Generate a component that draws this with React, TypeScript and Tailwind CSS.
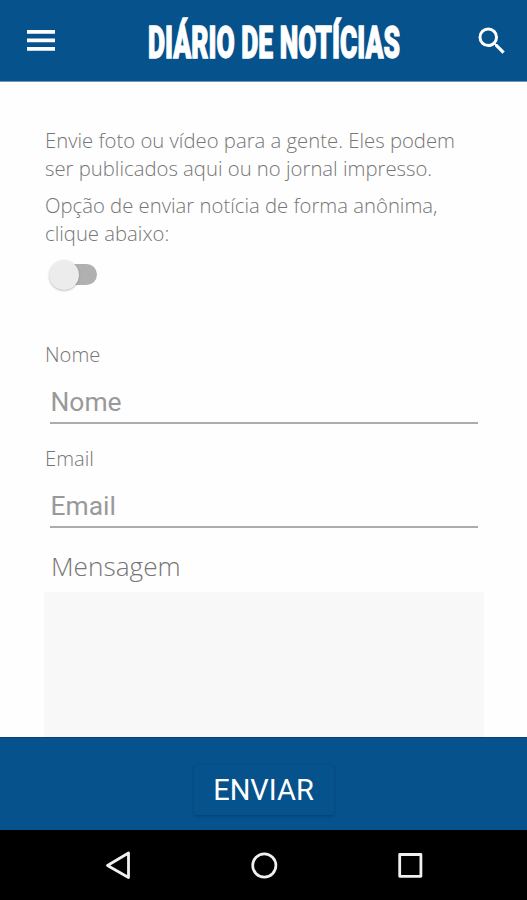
import React, { useState } from "react";

type TextFieldProps = {
  id: string;
  label: string;
  type?: string;
};

const TextField: React.FC<TextFieldProps> = ({ id, label, type = "text" }) => {
  const [value, setValue] = useState("");

  return (
    <div className="h-[104px]">
      <label htmlFor={id} className="block h-7 pl-px text-[20.2px] leading-[27px] font-light">
        {label}
      </label>
      <input
        id={id}
        type={type}
        value={value}
        placeholder={label}
        onChange={(e) => setValue(e.target.value)}
        className="mt-[13px] ml-[6px] block h-[42px] w-[428px] border-b-2 border-[#acacac] bg-transparent pl-[0.5px] font-['Roboto',sans-serif] text-[26.4px] text-[#777] outline-none placeholder:text-[#999]"
      />
    </div>
  );
};

const App: React.FC = () => {
  const [anonymous, setAnonymous] = useState(false);
  const [message, setMessage] = useState("");

  return (
    <div className="flex h-[900px] w-[527px] flex-col overflow-hidden bg-[#fefefe] font-['Open_Sans',sans-serif] text-[#767676]">
      {/* Top bar */}
      <header className="flex h-[82px] shrink-0 items-center justify-between border-b border-[#7595b5] bg-[#06528c] pr-[17px] pl-[27px] text-white">
        <button aria-label="Menu" className="block">
          <svg width="28" height="21" viewBox="0 0 28 21" fill="currentColor">
            <path d="M0 0h28v3.7H0zM0 8.6h28v3.7H0zM0 17h28v3.7H0z" />
          </svg>
        </button>
        <svg width="260" height="70" viewBox="0 0 260 70" className="ml-[17px] shrink-0 overflow-visible">
          <text
            x="5"
            y="52"
            textLength="252"
            lengthAdjust="spacingAndGlyphs"
            className="fill-white stroke-white font-['Roboto',sans-serif] text-[43.5px] font-black"
            strokeWidth="1.3"
          >
            DIÁRIO DE NOTÍCIAS
          </text>
        </svg>
        <button aria-label="Buscar" className="mt-px block">
          <svg width="36" height="36" viewBox="0 0 24 24" fill="currentColor">
            <path d="M15.5 14h-.79l-.28-.27A6.471 6.471 0 0 0 16 9.5 6.5 6.5 0 1 0 9.5 16c1.61 0 3.09-.59 4.23-1.57l.27.28v.79l5 4.99L20.49 19l-4.99-5zm-6 0C7.01 14 5 11.99 5 9.5S7.01 5 9.5 5 14 7.01 14 9.5 11.99 14 9.5 14z" />
          </svg>
        </button>
      </header>

      {/* Form */}
      <main className="min-h-0 flex-1 overflow-hidden px-[44px] pt-[44px]">
        <div className="pl-px text-[20.3px] leading-7 font-light whitespace-nowrap">
          <p>
            Envie foto ou vídeo para a gente. Eles podem
            <br />
            ser publicados aqui ou no jornal impresso.
          </p>
          <p className="mt-[9px]">
            Opção de enviar notícia de forma anônima,
            <br />
            clique abaixo:
          </p>
        </div>

        <button
          role="switch"
          aria-checked={anonymous}
          aria-label="Enviar anonimamente"
          onClick={() => setAnonymous(!anonymous)}
          className="mt-[12px] ml-[5px] flex h-[31px] w-12 items-center"
        >
          <span
            className={`ml-[5px] flex h-[21px] w-[43px] items-center rounded-full ${
              anonymous ? "justify-end bg-[#7ba3c4]" : "justify-start bg-[#b0b0b0]"
            }`}
          >
            <span className="-ml-[5px] h-[30px] w-[30px] shrink-0 rounded-full bg-[#ececec] shadow-[0_1px_2px_rgba(0,0,0,0.25)]" />
          </span>
        </button>

        <div className="mt-[51px]">
          <TextField id="nome" label="Nome" />
          <TextField id="email" label="Email" type="email" />
        </div>

        <label htmlFor="mensagem" className="ml-[7px] block h-[43px] text-[26.2px] leading-[34px] font-light">
          Mensagem
        </label>
        <textarea
          id="mensagem"
          value={message}
          onChange={(e) => setMessage(e.target.value)}
          className="block h-[240px] w-[440px] resize-none bg-[#f8f8f8] p-3 text-[20px] outline-none"
        />
      </main>

      {/* Submit */}
      <div className="flex h-[93px] shrink-0 justify-center border-t border-[#06407a] bg-[#06528c] pt-[27px]">
        <button className="h-[50px] w-[140px] rounded-[3px] bg-[#06528c] font-['Roboto',sans-serif] text-[29px] leading-[50px] text-white shadow-[0_1px_3px_rgba(0,0,0,0.22)]">
          ENVIAR
        </button>
      </div>

      {/* Android navigation */}
      <nav className="flex h-[70px] shrink-0 items-center justify-between bg-black px-[103px] text-[#f0f0f0]">
        <svg width="30" height="30" viewBox="0 0 30 30" fill="none" stroke="currentColor" strokeWidth="2.8" strokeLinejoin="round">
          <path d="M25.5 3v24.5L4.5 15.5z" />
        </svg>
        <svg width="30" height="30" viewBox="0 0 30 30" fill="none" stroke="currentColor" strokeWidth="2.7">
          <circle cx="15.3" cy="15.5" r="11.6" />
        </svg>
        <svg width="30" height="30" viewBox="0 0 30 30" fill="none" stroke="currentColor" strokeWidth="2.8" strokeLinejoin="round">
          <path d="M5.7 4.5h21.2v21.8H5.7z" />
        </svg>
      </nav>
    </div>
  );
};

export default App;
